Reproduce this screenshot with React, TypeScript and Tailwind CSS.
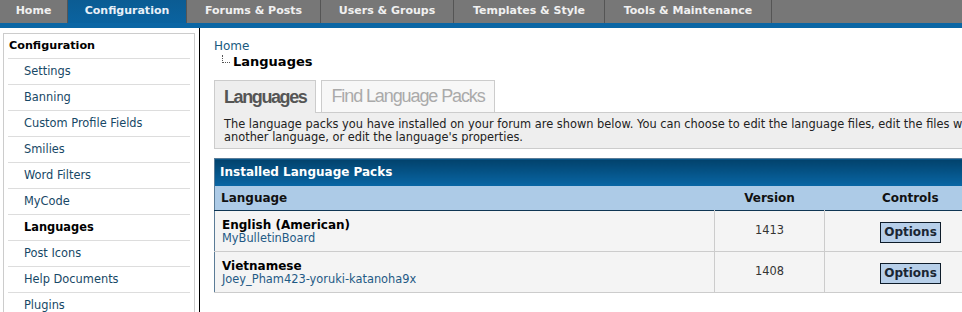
const navTabs = [
  { label: "Home", w: "w-[68px]" },
  { label: "Configuration", w: "w-[119px]", active: true },
  { label: "Forums & Posts", w: "w-[134px]" },
  { label: "Users & Groups", w: "w-[133px]" },
  { label: "Templates & Style", w: "w-[151px]" },
  { label: "Tools & Maintenance", w: "w-[167px]" },
];

const sideItems = [
  "Settings",
  "Banning",
  "Custom Profile Fields",
  "Smilies",
  "Word Filters",
  "MyCode",
  "Languages",
  "Post Icons",
  "Help Documents",
  "Plugins",
];

const packs = [
  { name: "English (American)", author: "MyBulletinBoard", version: "1413" },
  { name: "Vietnamese", author: "Joey_Pham423-yoruki-katanoha9x", version: "1408" },
];

const App = () => {
  return (
    <div className="w-[962px] h-[312px] overflow-hidden bg-white font-['DejaVu_Sans',Verdana,sans-serif] text-[#222]">
      {/* Top navigation */}
      <div className="flex h-[28px] bg-[#777] border-b-[5px] border-[#0b66a4]">
        {navTabs.map((t) => (
          <div
            key={t.label}
            className={`${t.w} flex items-center justify-center border-r border-[#555] text-[11px] font-bold ${
              t.active ? "bg-gradient-to-b from-[#0b5c93] to-[#0a63a0] text-[#e8f0f8]" : "text-[#f0f0f0]"
            }`}
          >
            {t.label}
          </div>
        ))}
      </div>

      <div className="flex">
        {/* Sidebar */}
        <div className="w-[200px] shrink-0 h-[284px] border-r border-black pt-[5px] pl-[3px]">
          <div className="w-[192px] border border-[#ccc] px-[4px]">
            <div className="h-[25px] flex items-center pl-[1px] pt-[1px] border-b border-[#ddd] text-[11.2px] font-bold text-black">
              Configuration
            </div>
            {sideItems.map((item) => (
              <div
                key={item}
                className={`h-[26px] flex items-center pl-[16px] pt-[1px] border-b border-[#ddd] text-[11.4px] ${
                  item === "Languages" ? "font-bold text-black" : "text-[#174866]"
                }`}
              >
                {item}
              </div>
            ))}
          </div>
        </div>

        {/* Main content */}
        <div className="w-[900px] shrink-0 pl-[14px] pt-[10px]">
          {/* Breadcrumb */}
          <div className="text-[12px] leading-[15px] text-[#1a5a80] pt-[1px]">Home</div>
          <div className="flex items-end h-[15px]">
            <div className="ml-[8px] mb-[6px] w-[8px] h-[8px] border-l border-b border-dotted border-[#555]" />
            <span className="ml-[3px] text-[13px] leading-[15px] font-bold text-black">Languages</span>
          </div>

          {/* Tabs */}
          <div className="flex items-end gap-[5px] mt-[11px]">
            <div className="relative z-10 -mb-px h-[33px] px-[9px] flex items-center bg-[#eee] border border-b-0 border-[#ccc] font-['Liberation_Sans',Arial,sans-serif] text-[18px] font-bold tracking-[-1.4px] text-[#555]">
              Languages
            </div>
            <div className="h-[32px] px-[9px] flex items-center bg-[#f7f7f7] border border-b-0 border-[#ccc] font-['Liberation_Sans',Arial,sans-serif] text-[18px] tracking-[-1.1px] text-[#aaa]">
              Find Language Packs
            </div>
          </div>

          {/* Description */}
          <div className="bg-[#eee] border border-[#ccc] px-[9px] pt-[5px] pb-[4px] text-[11.4px] leading-[13px] text-[#222] whitespace-nowrap">
            <div>
              The language packs you have installed on your forum are shown below. You can choose to edit the language files, edit the files which will be used for
            </div>
            <div>another language, or edit the language's properties.</div>
          </div>

          {/* Installed language packs table */}
          <table className="mt-[9px] w-[782px] table-fixed border-collapse border border-[#5b7c97]">
            <colgroup>
              <col className="w-[500px]" />
              <col className="w-[110px]" />
              <col className="w-[172px]" />
            </colgroup>
            <thead>
              <tr>
                <th
                  colSpan={3}
                  className="h-[27px] bg-gradient-to-b from-[#02426c] to-[#0a67a6] text-left pl-[5px] text-[12px] font-bold text-white"
                >
                  Installed Language Packs
                </th>
              </tr>
              <tr className="bg-[#adcbe7] border-b border-[#0f3653]">
                <th className="h-[25px] text-left pl-[6px] text-[12px] font-bold text-[#111]">Language</th>
                <th className="text-center text-[12px] font-bold text-[#111]">Version</th>
                <th className="text-center text-[12px] font-bold text-[#111]">Controls</th>
              </tr>
            </thead>
            <tbody>
              {packs.map((p) => (
                <tr key={p.name} className="bg-[#f4f4f4] border-b border-[#ccc]">
                  <td className="h-[41px] pl-[7px] align-middle">
                    <div className="text-[12px] leading-[14px] font-bold text-black">{p.name}</div>
                    <div className="text-[11.4px] leading-[13px] text-[#1f5a85]">{p.author}</div>
                  </td>
                  <td className="border-l border-[#ccc] text-center text-[11.4px] text-[#333]">{p.version}</td>
                  <td className="border-l border-[#ccc] text-center">
                    <button
                      type="button"
                      className="h-[21px] px-[3px] bg-[#b7cfe9] border border-[#0e1c2a] text-[12px] font-bold text-[#1a2633]"
                    >
                      Options
                    </button>
                  </td>
                </tr>
              ))}
            </tbody>
          </table>
        </div>
      </div>
    </div>
  );
};

export default App;
